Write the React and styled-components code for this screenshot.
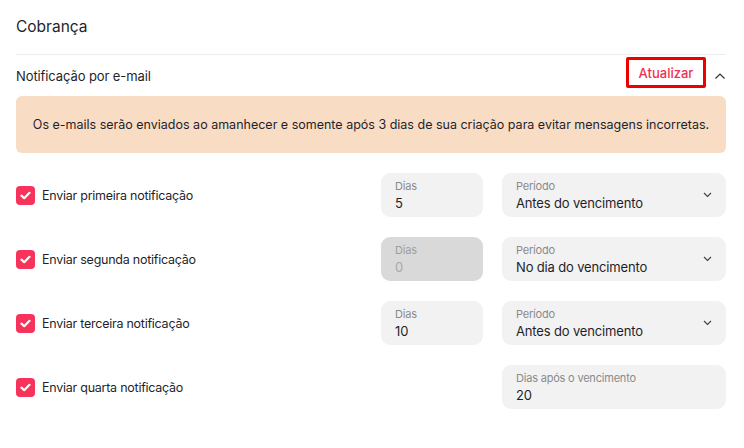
import React from 'react';
import styled, { createGlobalStyle } from 'styled-components';

const Global = createGlobalStyle`
  body {
    margin: 0;
    background: #fff;
    font-family: Inter, "Noto Sans", sans-serif;
    color: #1f1f2b;
  }
`;

const Page = styled.div`
  padding: 0 18px 0 16px;
`;

const Title = styled.h2`
  margin: 0;
  font-size: 15.5px;
  font-weight: 400;
  height: 54px;
  line-height: 54px;
  border-bottom: 1px solid #ececec;
`;

const SectionHeader = styled.div`
  display: flex;
  align-items: center;
  height: 41px;
`;

const SectionTitle = styled.span`
  flex: 1;
  font-size: 13px;
  letter-spacing: -0.1px;
`;

const UpdateButton = styled.button`
  border: 3px solid #ee0000;
  border-radius: 2px;
  background: #fff;
  color: #ee3150;
  font-family: inherit;
  font-size: 13px;
  font-weight: 500;
  width: 80px;
  height: 31px;
  padding: 0;
  margin: 0 8px 6px 0;
  cursor: pointer;
`;

const Alert = styled.div`
  background: #f9dcc4;
  border-radius: 6px;
  height: 57px;
  display: flex;
  align-items: center;
  justify-content: center;
  font-size: 12.5px;
  margin-bottom: 20px;
`;

const Rows = styled.div`
  display: flex;
  flex-direction: column;
  gap: 20px;
`;

const Row = styled.div`
  display: grid;
  grid-template-columns: 1fr 102px 224px;
  column-gap: 19px;
  align-items: center;
`;

const CheckLabel = styled.label`
  display: flex;
  align-items: center;
  gap: 7px;
  font-size: 12.5px;
  letter-spacing: -0.25px;
`;

const Box = styled.span`
  width: 19px;
  height: 19px;
  border-radius: 4px;
  background: #f5335b;
  display: flex;
  align-items: center;
  justify-content: center;
`;

const Field = styled.div`
  grid-column: ${p => p.$col};
  height: 44px;
  border-radius: 9px;
  background: ${p => (p.$disabled ? '#d9d9d9' : '#f2f2f2')};
  padding: 6px 14px;
  box-sizing: border-box;
  display: flex;
  align-items: center;
`;

const FieldBody = styled.div`
  flex: 1;
  display: flex;
  flex-direction: column;
`;

const FieldLabel = styled.span`
  font-size: 11px;
  letter-spacing: -0.2px;
  color: ${p => (p.$disabled ? '#9e9e9e' : '#8a8a8a')};
  line-height: 15px;
`;

const FieldValue = styled.span`
  font-size: 13px;
  letter-spacing: -0.15px;
  line-height: 18px;
  color: ${p => (p.$disabled ? '#a8a8a8' : '#1f1f2b')};
`;

const Check = () => (
  <svg width="11" height="9" viewBox="0 0 11 9">
    <path d="M1.5 4.6 L4.2 7.2 L9.5 1.8" fill="none" stroke="#fff" strokeWidth="2.2" strokeLinecap="round" strokeLinejoin="round" />
  </svg>
);

const Chevron = ({ up }) => (
  <svg width="12" height="8" viewBox="0 0 12 8" style={up ? { transform: 'rotate(180deg)' } : undefined}>
    <path d="M1.5 1.5 L6 6 L10.5 1.5" fill="none" stroke="#333" strokeWidth="1.2" />
  </svg>
);

const SmallChevron = () => (
  <svg width="9" height="6" viewBox="0 0 9 6">
    <path d="M1 1 L4.5 4.5 L8 1" fill="none" stroke="#444" strokeWidth="1.2" />
  </svg>
);

const rows = [
  { label: 'Enviar primeira notificação', dias: '5', periodo: 'Antes do vencimento' },
  { label: 'Enviar segunda notificação', dias: '0', periodo: 'No dia do vencimento', disabled: true },
  { label: 'Enviar terceira notificação', dias: '10', periodo: 'Antes do vencimento' },
];

export default function App() {
  return (
    <Page>
      <Global />
      <Title>Cobrança</Title>
      <SectionHeader>
        <SectionTitle>Notificação por e-mail</SectionTitle>
        <UpdateButton>Atualizar</UpdateButton>
        <Chevron up />
      </SectionHeader>
      <Alert>
        Os e-mails serão enviados ao amanhecer e somente após 3 dias de sua criação para evitar mensagens incorretas.
      </Alert>
      <Rows>
        {rows.map(r => (
          <Row key={r.label}>
            <CheckLabel>
              <Box><Check /></Box>
              {r.label}
            </CheckLabel>
            <Field $col={2} $disabled={r.disabled}>
              <FieldBody>
                <FieldLabel $disabled={r.disabled}>Dias</FieldLabel>
                <FieldValue $disabled={r.disabled}>{r.dias}</FieldValue>
              </FieldBody>
            </Field>
            <Field $col={3}>
              <FieldBody>
                <FieldLabel>Período</FieldLabel>
                <FieldValue>{r.periodo}</FieldValue>
              </FieldBody>
              <SmallChevron />
            </Field>
          </Row>
        ))}
        <Row>
          <CheckLabel>
            <Box><Check /></Box>
            Enviar quarta notificação
          </CheckLabel>
          <Field $col={3}>
            <FieldBody>
              <FieldLabel>Dias após o vencimento</FieldLabel>
              <FieldValue>20</FieldValue>
            </FieldBody>
          </Field>
        </Row>
      </Rows>
    </Page>
  );
}
